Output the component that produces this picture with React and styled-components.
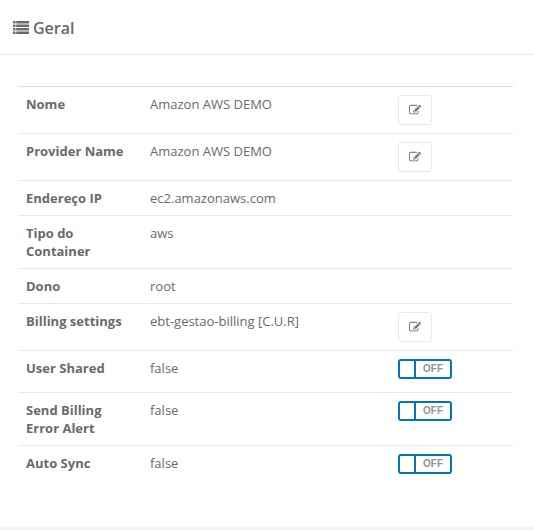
import React from "react";
import styled, { createGlobalStyle } from "styled-components";

const GlobalStyle = createGlobalStyle`
  * { box-sizing: border-box; }
  body {
    margin: 0;
    background: #f3f3f3;
    color: #676a6c;
    font-family: "Open Sans", "Noto Sans", sans-serif;
    font-size: 13px;
    line-height: 18px;
  }
`;

const Panel = styled.section`
  height: 527px;
  background: #fff;
`;

const PanelHeader = styled.header`
  display: flex;
  align-items: center;
  gap: 3px;
  height: 55px;
  padding: 2px 13px 0;
  border-bottom: 1px solid #e7eaec;
`;

const Title = styled.h5`
  margin: 0;
  font-size: 16px;
  font-weight: 600;
  line-height: 22px;
`;

const ListIcon = styled.svg`
  width: 17px;
  height: 14px;
  fill: currentColor;
`;

const Details = styled.dl`
  width: 495px;
  margin: 31px 0 0 18px;
  border-top: 1px solid #dddfe1;
`;

const Row = styled.div`
  display: grid;
  grid-template-columns: 124px 248px 1fr;
  align-items: start;
  height: ${({ $height }) => $height}px;
  padding-top: 8px;
  border-bottom: ${({ $last }) => ($last ? "none" : "1px solid #e7eaec")};
`;

const Label = styled.dt`
  padding: 0 8px;
  font-weight: 700;
`;

const Value = styled.dd`
  margin: 0;
  padding: 0 8px;
`;

const Action = styled.dd`
  display: flex;
  margin: 0;
  padding: 0 8px;
`;

const EditButton = styled.button`
  display: flex;
  align-items: center;
  justify-content: center;
  width: 34px;
  height: 30px;
  padding: 0;
  border: 1px solid #e7eaec;
  border-radius: 3px;
  background: #fff;
  color: #676a6c;
  cursor: pointer;
`;

const PencilIcon = styled.svg`
  width: 12px;
  height: 12px;
  fill: currentColor;
`;

const Switch = styled.button`
  display: flex;
  width: 54px;
  height: 20px;
  padding: 0;
  border: 2px solid #0075b8;
  border-radius: 3px;
  background: #fff;
  cursor: pointer;
`;

const SwitchHandle = styled.span`
  width: 16px;
  height: 16px;
  border-right: 2px solid #0075b8;
`;

const SwitchText = styled.span`
  flex: 1;
  color: #939393;
  font: 700 10px/16px "Liberation Sans", Arial, sans-serif;
  text-align: center;
`;

const rows = [
  { label: "Nome", value: "Amazon AWS DEMO", action: "edit", height: 47 },
  { label: "Provider Name", value: "Amazon AWS DEMO", action: "edit", height: 47 },
  { label: "Endereço IP", value: "ec2.amazonaws.com", height: 35 },
  { label: "Tipo do Container", value: "aws", height: 53 },
  { label: "Dono", value: "root", height: 35 },
  { label: "Billing settings", value: "ebt-gestao-billing [C.U.R]", action: "edit", height: 47 },
  { label: "User Shared", value: "false", action: "switch", height: 42 },
  { label: "Send Billing Error Alert", value: "false", action: "switch", height: 53 },
  { label: "Auto Sync", value: "false", action: "switch", height: 42 },
];

function Edit() {
  return (
    <EditButton type="button" aria-label="Editar">
      <PencilIcon viewBox="0 0 1792 1792" aria-hidden="true">
        <path d="M888 1184l116-116-152-152-116 116v56h96v96h56zm440-720q-16-16-33 1l-350 350q-17 17-1 33t33-1l350-350q17-17 1-33zm80 594v190q0 119-84.5 203.5t-203.5 84.5h-832q-119 0-203.5-84.5t-84.5-203.5v-832q0-119 84.5-203.5t203.5-84.5h832q63 0 117 25 15 7 18 23 3 17-9 29l-49 49q-14 14-32 8-23-6-45-6h-832q-66 0-113 47t-47 113v832q0 66 47 113t113 47h832q66 0 113-47t47-113v-126q0-13 9-22l64-64q15-15 35-7t20 29zm-96-738l288 288-672 672h-288v-288zm444 132l-92 92-288-288 92-92q28-28 68-28t68 28l152 152q28 28 28 68t-28 68z" />
      </PencilIcon>
    </EditButton>
  );
}

function Toggle() {
  return (
    <Switch type="button" role="switch" aria-checked="false">
      <SwitchHandle />
      <SwitchText>OFF</SwitchText>
    </Switch>
  );
}

export default function App() {
  return (
    <>
      <GlobalStyle />
      <Panel>
        <PanelHeader>
          <ListIcon viewBox="0 0 17 14" aria-hidden="true">
            {[0, 3.5, 7, 10.5].map((y) => (
              <g key={y}>
                <rect x="0" y={y} width="2.5" height="2.5" />
                <rect x="3.2" y={y} width="12.8" height="2.5" />
              </g>
            ))}
          </ListIcon>
          <Title>Geral</Title>
        </PanelHeader>
        <Details>
          {rows.map((row, i) => (
            <Row key={row.label} $height={row.height} $last={i === rows.length - 1}>
              <Label>{row.label}</Label>
              <Value>{row.value}</Value>
              {row.action && <Action>{row.action === "edit" ? <Edit /> : <Toggle />}</Action>}
            </Row>
          ))}
        </Details>
      </Panel>
    </>
  );
}
